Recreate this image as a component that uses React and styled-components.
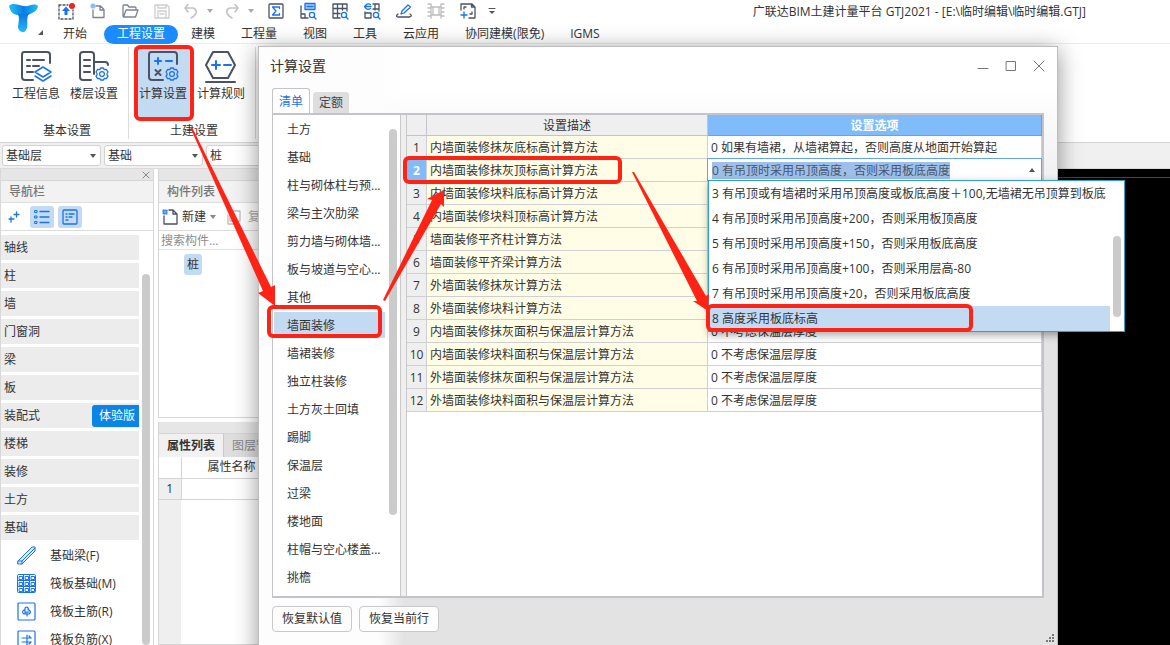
import React from 'react';
import styled, { createGlobalStyle, css } from 'styled-components';

const blue = '#1a73e8';
const slate = '#4a5266';
const red = '#ff2316';

const GlobalStyle = createGlobalStyle`
  * { box-sizing: border-box; }
  body {
    margin: 0;
    overflow: hidden;
    background: #fff;
  }
  body, button, input, select {
    color: #333;
    font: 12px/16px "Open Sans", "Noto Sans CJK SC", sans-serif;
  }
  button {
    margin: 0;
    padding: 0;
    border: 0;
    background: none;
    white-space: nowrap;
  }
  ul {
    margin: 0;
    padding: 0;
    list-style: none;
  }
`;

const Window = styled.div`
  position: relative;
  display: flex;
  flex-direction: column;
  height: 100vh;
  overflow: hidden;
  white-space: nowrap;
`;

const Header = styled.header`
  display: flex;
  height: 44px;
  border-bottom: 1px solid #ededed;
`;

const AppMenu = styled.button`
  display: flex;
  width: 50px;
`;

const HeaderMain = styled.div`
  flex: 1;
`;

const QuickBar = styled.div`
  display: flex;
  align-items: center;
  height: 21px;
`;

const QuickButton = styled.button`
  display: flex;
  flex: none;
  align-items: center;
  justify-content: center;
  gap: 8px;
  width: ${props => props.$width || 32}px;
  height: 20px;
`;

const WindowTitle = styled.h1`
  margin: 2px 84px 0 auto;
  font-size: 12px;
  font-weight: 400;
`;

const MenuTabs = styled.nav`
  display: flex;
  align-items: center;
  height: 23px;
  padding-top: 3px;
`;

const MenuTab = styled.button`
  height: 19px;
  padding: 0 13px;
  ${props => props.$active && css`
    margin: 0 0 0 4px;
    border-radius: 10px;
    background: #1a8cff;
    color: #fff;
  `}
`;

const Ribbon = styled.section`
  display: flex;
  height: 99px;
  padding-left: 2px;
  border-bottom: 1px solid #d4d4d4;
`;

const RibbonGroup = styled.div`
  display: flex;
  flex-direction: column;
  justify-content: space-between;
  margin: 3px 0;
  padding: 0 5px;
  border-right: 1px solid #dcdcdc;
  text-align: center;
`;

const RibbonButtons = styled.div`
  display: flex;
`;

const RibbonButton = styled.button`
  display: flex;
  flex-direction: column;
  align-items: center;
  gap: 3px;
  width: 58px;
  height: 70px;
  padding-top: 2px;
  background: ${props => (props.$active ? '#c3daf3' : 'none')};
`;

const GroupLabel = styled.div`
  padding-left: 4px;
`;

const SelectorBar = styled.div`
  display: flex;
  align-items: center;
  gap: 3px;
  height: 26px;
  padding-left: 2px;
  border-bottom: 1px solid #dadada;
  background: #f0f0f0;
`;

const SelectWrap = styled.label`
  position: relative;
  width: 99px;

  svg {
    position: absolute;
    top: 9px;
    right: 5px;
    pointer-events: none;
  }
`;

const Select = styled.select`
  appearance: none;
  width: 100%;
  height: 21px;
  padding: 0 3px;
  border: 1px solid #d2d2d2;
  border-radius: 3px;
  background: #fff;
`;

const Workspace = styled.main`
  display: flex;
  flex: 1;
  gap: 4px;
  min-height: 0;
`;

const NavPanel = styled.aside`
  display: flex;
  flex-direction: column;
  width: 154px;
  border: solid #d8d8d8;
  border-width: 0 1px;
`;

const PanelStrip = styled.div`
  display: flex;
  flex: none;
  align-items: center;
  justify-content: flex-end;
  height: 12px;
  padding-right: 3px;
  border-bottom: 1px solid #d6d6d6;
  background: #e6e6e6;

  button {
    display: flex;
  }
`;

const PanelTitle = styled.h2`
  flex: none;
  height: 22px;
  margin: 0;
  padding: 0 8px;
  border-bottom: 1px solid #dedede;
  background: #f2f2f2;
  color: #777;
  font-size: 12px;
  font-weight: 500;
  line-height: 22px;
`;

const Toolbar = styled.div`
  display: flex;
  flex: none;
  align-items: center;
  gap: 4px;
  height: 28px;
  padding: 0 ${props => props.$pad}px;
  border-bottom: 1px solid #dcdcdc;
`;

const ToolButton = styled.button`
  display: flex;
  align-items: center;
  justify-content: center;
  gap: 4px;
  min-width: ${props => (props.$label ? 0 : 24)}px;
  height: 22px;
  border-radius: 3px;
  background: ${props => (props.$active ? '#c3daf3' : 'none')};
  color: ${props => (props.disabled ? '#aaa' : '#333')};
`;

const NavBody = styled.div`
  display: flex;
  flex: 1;
  gap: 3px;
  min-height: 0;
  padding: 4px 3px 0 0;
`;

const NavList = styled.ul`
  flex: 1;
`;

const NavItem = styled.li`
  button {
    display: flex;
    align-items: center;
    justify-content: space-between;
    width: 100%;
    height: 25px;
    margin-bottom: 3px;
    padding-left: 3px;
    background: #ececec;
  }
`;

const TrialBadge = styled.span`
  height: 22px;
  padding: 0 4px 0 7px;
  border-radius: 3px 0 0 3px;
  background: #0b84e8;
  color: #fff;
  line-height: 21px;
`;

const NavChild = styled.li`
  button {
    display: flex;
    align-items: center;
    gap: 13px;
    height: 28px;
    padding: 0 0 2px 16px;
  }
`;

const Scrollbar = styled.div`
  width: 8px;
  height: ${props => (props.$length ? `${props.$length}px` : 'auto')};
  margin-top: ${props => props.$top}px;
  border-radius: 4px;
  background: #cbcbcb;
`;

const SideColumn = styled.div`
  display: flex;
  flex-direction: column;
  gap: 4px;
  width: 240px;
`;

const SidePanel = styled.section`
  display: flex;
  flex: ${props => (props.$height ? 'none' : 1)};
  flex-direction: column;
  height: ${props => (props.$height ? `${props.$height}px` : 'auto')};
  border: 1px solid #d6d6d6;
  border-top: 0;
`;

const SearchInput = styled.input`
  height: 19px;
  padding: 0 2px;
  border: 0;
  border-bottom: 1px solid #e2e2e2;

  &::placeholder { color: #8c8c8c; }
`;

const ComponentChip = styled.button`
  align-self: flex-start;
  height: 21px;
  margin: 4px 0 0 25px;
  padding: 0 3px;
  border-radius: 3px;
  background: #c3daf3;
`;

const PropertyTabs = styled.div`
  display: flex;
  height: 23px;
  background: #dedede;

  button {
    padding: 0 8px;
    border-right: 1px solid #c9c9d2;
    color: #888;
  }

  button[aria-selected='true'] {
    background: #f1f1f1;
    color: #333;
    font-weight: 700;
  }
`;

const PropertyTable = styled.table`
  border-collapse: collapse;
  table-layout: fixed;
  width: 100%;

  th, td {
    height: 21px;
    padding: 0;
    border: 1px solid #d4d4d4;
    border-width: 0 1px 1px 0;
    font-weight: 400;
    text-align: center;
  }

  th:first-child { width: 22px; }
  thead th:nth-child(2) { width: 101px; }
  tbody th { background: #efefef; }
`;

const PropertyRest = styled.div`
  flex: 1;
  width: 22px;
  background: #efefef;
`;

const Canvas = styled.div`
  flex: 1;
  padding-top: 8px;
  background: #000;
`;

const AxisLine = styled.div`
  height: 1px;
  background: #f00000;
`;

const Dialog = styled.section`
  position: absolute;
  top: 46px;
  right: 112px;
  bottom: -20px;
  left: 258px;
  display: flex;
  flex-direction: column;
  padding: 0 13px 0 13px;
  border: 1px solid #bdbdbd;
  background:
    linear-gradient(to right, #fdfdfd 120px, rgba(253, 253, 253, 0) 145px),
    linear-gradient(to bottom, #fff 40px, #fafafa 75px, #f1f1f1 125px, #e3e3e3 180px);
  box-shadow: 0 4px 22px rgba(0, 0, 0, 0.42);
`;

const DialogHeader = styled.header`
  display: flex;
  align-items: center;
  justify-content: space-between;
  height: 41px;
  padding-bottom: 4px;

  h2 {
    margin: 0;
    font-size: 14px;
    font-weight: 400;
    margin-left: -2px;
  }
`;

const WindowControls = styled.div`
  display: flex;
  gap: 16px;
  margin-right: -1px;

  button { display: flex; }
`;

const DialogTabs = styled.div`
  display: flex;
  align-items: flex-end;
  gap: 3px;
  height: 25px;
`;

const DialogTab = styled.button`
  width: 36px;
  height: 21px;
  border-radius: 3px 3px 0 0;
  background: #dedede;
  color: #444;

  &[aria-selected='true'] {
    width: 38px;
    height: 25px;
    padding-top: 2px;
    border: 1px solid #c3c3c9;
    border-bottom: 0;
    background: #fff;
    color: ${blue};
  }
`;

const DialogBody = styled.div`
  display: flex;
  flex: none;
  height: calc(100vh - 160px);
  min-height: 300px;
  border: 2px solid #c3c3c9;
  border-left-width: 1px;
  background: #fff;
`;

const CategoryPane = styled.div`
  display: flex;
  justify-content: space-between;
  flex: none;
  width: 127px;
  padding: 1px 3px 0 1px;
`;

const CategoryList = styled.ul`
  width: 111px;
`;

const CategoryItem = styled.li`
  button {
    width: 100%;
    height: 26px;
    margin-bottom: 2px;
    padding: 2px 4px 0 13px;
    overflow: visible;
    background: ${props => (props.$active ? '#c3daf3' : 'none')};
    text-align: left;
  }
`;

const Splitter = styled.div`
  flex: none;
  width: 7px;
  border: solid #c9c9c9;
  border-width: 0 1px;
  background: #efefef;
`;

const TablePane = styled.div`
  flex: 1;
  min-width: 0;
`;

const SettingsTable = styled.table`
  border-collapse: separate;
  border-spacing: 0;
  table-layout: fixed;
  width: 100%;

  th, td {
    height: 23px;
    padding: 2px 3px 0;
    border: solid #d0d0d4;
    border-width: 0 1px 1px 0;
    font-weight: 400;
  }

  thead th {
    height: 21px;
    border-color: #c3c3c9;
    background: #efefef;
  }

  thead th:first-child { width: 20px; }
  thead th:nth-child(2) { width: 281px; }

  thead th:last-child {
    border-color: #62a4e4;
    background: #80bbfb;
    color: #fff;
    font-weight: 700;
  }
`;

const RowNumber = styled.th`
  && {
    padding: 2px 0 0;
    background: ${props => (props.$active ? '#80bbfb' : '#efefef')};
    color: ${props => (props.$active ? '#fff' : '#333')};
    font-weight: ${props => (props.$active ? 700 : 400)};
  }
`;

const DescriptionCell = styled.td`
  background: #fffde5;
`;

const OptionCell = styled.td`
  && {
    ${props => props.$editing && css`
      padding: 0;
      border: 0;
      vertical-align: top;
    `}
  }
`;

const Combo = styled.div`
  position: relative;
  display: flex;
  align-items: center;
  justify-content: space-between;
  height: 23px;
  margin: -1px 0 0 -1px;
  padding: 1px 6px 0 4px;
  border: 1px solid #62a4e4;
  border-bottom-color: #1f9bcf;
`;

const ComboInput = styled.input`
  field-sizing: content;
  height: 17px;
  padding: 0;
  border: 0;
  background: #9dbfe9;
  color: #4a5568;
`;

const ComboToggle = styled.button`
  display: flex;
`;

const Popup = styled.div`
  position: absolute;
  z-index: 2;
  top: 21px;
  left: 0;
  display: flex;
  gap: 3px;
  width: 417px;
  padding-right: 3px;
  border: 1px solid #2fa0d0;
  background: #fff;
  box-shadow: 1px 3px 8px rgba(0, 0, 0, 0.35);
`;

const Options = styled.ul`
  flex: 1;
`;

const Option = styled.li`
  height: 25px;
  padding: 0 3px;
  background: ${props => (props.$active ? '#c3daf3' : '#fff')};
  line-height: 25px;
`;

const DialogFooter = styled.footer`
  display: flex;
  gap: 7px;
  padding-top: 8px;
`;

const FooterButton = styled.button`
  width: 80px;
  height: 26px;
  border: 1px solid #c8c8c8;
  border-radius: 4px;
  background: #fdfdfd;
`;

const ResizeGrip = styled.svg`
  position: absolute;
  right: 3px;
  bottom: 22px;
`;

const Annotations = styled.svg`
  position: absolute;
  z-index: 3;
  top: 0;
  left: 0;
  pointer-events: none;
`;

const Icon = ({ size = 18, color = slate, width = 1.3, children, ...rest }) => (
  <svg
    width={size}
    height={size}
    viewBox={`0 0 ${size} ${size}`}
    fill="none"
    stroke={color}
    strokeWidth={width}
    strokeLinecap="round"
    strokeLinejoin="round"
    aria-hidden="true"
    {...rest}
  >
    {children}
  </svg>
);

const Caret = ({ color = '#555', up }) => (
  <svg width="6" height="4" viewBox="0 0 6 4" aria-hidden="true">
    <path d={up ? 'M0 4L3 0L6 4Z' : 'M0 0H6L3 4Z'} fill={color} />
  </svg>
);

const Logo = () => (
  <svg width="49" height="43" viewBox="0 0 49 43" aria-hidden="true">
    <defs>
      <linearGradient id="logoTop" x1="0" x2="1">
        <stop offset="0" stopColor="#22c4f5" />
        <stop offset="0.5" stopColor="#0a7ee4" />
        <stop offset="1" stopColor="#1cc0f6" />
      </linearGradient>
      <linearGradient id="logoStem" x1="0" x2="0" y1="0" y2="1">
        <stop offset="0" stopColor="#0b74dc" />
        <stop offset="1" stopColor="#25b9fa" />
      </linearGradient>
    </defs>
    <path d="M9 6C12 2 18 5 24 6C29 7 34 2 38 6C37 12 32 13 28 15C25 18 20 18 18 15C13 15 10 11 9 6Z" fill="url(#logoTop)" />
    <path d="M18 13C21 15 25 14 29 13C26 18 28 24 27 28C25 34 20 33 18 28C18 24 20 19 18 13Z" fill="url(#logoStem)" />
    <path d="M43 30V35H38Z" fill="#555" />
  </svg>
);

const Gear = ({ x, y }) => (
  <g transform={`translate(${x} ${y})`} stroke={blue} strokeWidth="1.3">
    <path d="M-1.5-6H1.5L2.2-4.3L4.3-4.6L6-2L5-.5V.8L6 2.2L4.4 4.6L2.4 4.4L1.5 6H-1.5L-2.4 4.4L-4.4 4.6L-6 2.2L-5 .8V-.5L-6-2L-4.3-4.6L-2.2-4.3Z" />
    <circle r="2.4" />
  </g>
);

const Lens = () => (
  <g stroke={blue}>
    <circle cx="13" cy="13" r="2.6" />
    <path d="M15 15L17 17" />
  </g>
);

const quickActions = [
  {
    label: '上传',
    icon: (
      <Icon>
        <path d="M2 3H11M2 3V17H16V8" strokeDasharray="2 2" />
        <path d="M9 4.500L13 9H10.500V13H7.500V9H5Z" fill={blue} stroke="none" />
        <circle cx="15" cy="4" r="3" fill="#e8232a" stroke="none" />
      </Icon>
    )
  },
  {
    label: '新建',
    icon: (
      <Icon color="#7c8290">
        <path d="M4 8V15.500H15V7.500L11.500 4H7M11 4V8H15" />
        <circle cx="4" cy="4" r="2.600" fill="#8ebdf5" stroke="none" />
      </Icon>
    )
  },
  {
    label: '打开',
    icon: <Icon color="#7c8290"><path d="M2 14V4Q2 3 3 3H6.500L8 5H14Q15 5 15 6V7M2.500 15L5 8H17L14.500 15Z" /></Icon>
  },
  {
    label: '保存',
    icon: <Icon color="#cdcdcd"><path d="M2 3H14L16 5V16H2ZM5 3V6H13V3M5 16V9H13V16M7 12H11" /></Icon>
  },
  {
    label: '撤销',
    width: 40,
    icon: <Icon color="#c3c3c3" size={16} width={1.6}><path d="M2 5H10Q14 6 13 10Q12 13 8 15M5 1.500L2 5L5 9" /></Icon>,
    caret: true
  },
  {
    label: '恢复',
    width: 42,
    icon: <Icon color="#c3c3c3" size={16} width={1.6}><path d="M14 5H6Q2 6 3 10Q4 13 8 15M11 1.500L14 5L11 9" /></Icon>,
    caret: true
  },
  {
    label: '汇总计算',
    icon: (
      <Icon>
        <rect x="2" y="2" width="14" height="14" rx="1" />
        <path d="M12.500 6.500V5H5.500L9 9L5.500 13H12.500V11.500" stroke={blue} />
      </Icon>
    )
  },
  {
    label: '查看计算式',
    icon: (
      <Icon>
        <path d="M2 4V16H9M2 12H6V16" />
        <rect x="6" y="1.500" width="10" height="6" fill="#a9cdf8" stroke={blue} />
        <path d="M8 4.500H14" stroke={blue} />
        <Lens />
      </Icon>
    )
  },
  {
    label: '查看工程量',
    icon: <Icon><path d="M9 16H2V2H16V9M2 6.500H16M2 11.500H9M6.500 2V16M11.500 2V8" /><Lens /></Icon>
  },
  {
    label: '查看报表',
    icon: (
      <Icon>
        <path d="M10 2H16V9M2 10V16H8M2 11H8V16M12 2V8M10 7H16" />
        <path d="M7.500 2.500Q5 1 3 3L1.500 4.500L3 6.500Q5 8 7.500 6.500M1.500 4.500H8" stroke={blue} />
        <Lens />
      </Icon>
    )
  },
  {
    label: '编辑',
    icon: (
      <Icon>
        <path d="M3 12Q0 14.500 3 15H14Q18 14 15 12" />
        <path d="M6 12L7 9L13 3L15.500 5L9 11Z" stroke={blue} />
      </Icon>
    )
  },
  {
    label: '显示',
    icon: <Icon color="#bdbdbd"><path d="M4 2V16M14 2V16M4 5H14M4 13H14M6 5V13M12 5V13M1 2H4M1 6H4M1 10H4M1 14H4M14 2H17M14 6H17M14 10H17M14 14H17" /></Icon>
  },
  {
    label: '扩展',
    icon: (
      <Icon>
        <path d="M2 8V2H13L16 5V16H10M12.500 2V5H16M5 7V5H7M11 12H13V10" />
        <path d="M2 13H8M5 10V16" stroke={blue} />
      </Icon>
    )
  },
  {
    label: '自定义',
    width: 16,
    icon: <Icon size={8} color="#555" width={1}><path d="M1 1.500H7" /><path d="M1 4H7L4 7Z" fill="#555" stroke="none" /></Icon>
  }
];

const menuTabs = ['开始', '工程设置', '建模', '工程量', '视图', '工具', '云应用', '协同建模(限免)', 'IGMS'];

const ribbonGroups = [
  {
    label: '基本设置',
    buttons: [
      {
        text: '工程信息',
        icon: (
          <Icon size={34} width={2}>
            <path d="M31 14V6Q31 3 28 3H5Q3 3 3 6V28Q3 31 6 31H14" />
            <path d="M8 11H11M14 11H25M8 17H11M14 17H20M8 23H14" />
            <path d="M16 23L24 18L32 23L24 28ZM16 27L24 32L32 27" stroke={blue} strokeWidth="1.5" />
          </Icon>
        )
      },
      {
        text: '楼层设置',
        icon: (
          <Icon size={34} width={2}>
            <path d="M14 31H6Q3 31 3 28V6Q3 3 6 3H14Q17 3 17 6V25M17 13H28Q31 13 31 16" />
            <path d="M7 11H13M7 17H13M7 23H13" />
            <Gear x={25} y={25} />
          </Icon>
        )
      }
    ]
  },
  {
    label: '土建设置',
    buttons: [
      {
        text: '计算设置',
        active: true,
        icon: (
          <Icon size={34} width={2}>
            <path d="M31 15V6Q31 3 28 3H5Q3 3 3 6V28Q3 31 6 31H17" />
            <path d="M9 12H15M12 9V15M20 12H26" stroke={blue} />
            <path d="M9.500 21L14.500 26M14.500 21L9.500 26" />
            <Gear x={26} y={25} />
          </Icon>
        )
      },
      {
        text: '计算规则',
        icon: (
          <Icon size={34} width={2}>
            <path d="M9 3H24L31 16L24 29H9L2 16ZM2 33H31" />
            <path d="M8 16H16M12 12V20M20 16H27" stroke={blue} />
          </Icon>
        )
      }
    ]
  }
];

const navItems = ['轴线', '柱', '墙', '门窗洞', '梁', '板', '装配式', '楼梯', '装修', '土方', '基础'];

const gridCells = [1, 7, 13];

const foundationItems = [
  {
    text: '基础梁(F)',
    icon: <Icon size={20} color={blue} width={1}><path d="M1 15L15 1H18V5L5 18H1ZM1 15H5V18M5 15L18 2" fill="#dbe9fb" /></Icon>
  },
  {
    text: '筏板基础(M)',
    icon: (
      <Icon size={20} color={blue} width={1}>
        <rect x="0.500" y="0.500" width="18" height="18" rx="1" />
        {gridCells.map((y) => gridCells.map((x) => (
          <rect key={`${x}-${y}`} x={x + 1.5} y={y + 1.5} width="3" height="3" />
        )))}
        <path d="M.5 6.500H18.500M.5 12.500H18.500M6.500 .5V18.500M12.500 .5V18.500" />
      </Icon>
    )
  },
  {
    text: '筏板主筋(R)',
    icon: (
      <Icon size={20} color={blue} width={1.2}>
        <rect x="1" y="1" width="17" height="17" rx="1" />
        <path d="M8 12V7Q8 5 10 5Q12 6 11 8M7 8Q4 10 7 12H12Q15 10 12 8M9 10H12M10 10V14" />
      </Icon>
    )
  },
  {
    text: '筏板负筋(X)',
    icon: (
      <Icon size={20} color={blue} width={1.2}>
        <rect x="1" y="1" width="17" height="17" rx="1" />
        <path d="M5 8H14M5 12H14M10 5V15M12 6L14 8M12 14L14 12" />
      </Icon>
    )
  }
];

const categories = [
  '土方', '基础', '柱与砌体柱与预...', '梁与主次肋梁', '剪力墙与砌体墙...', '板与坡道与空心...', '其他', '墙面装修',
  '墙裙装修', '独立柱装修', '土方灰土回填', '踢脚', '保温层', '过梁', '楼地面', '柱帽与空心楼盖...', '挑檐'
];

const settings = [
  { text: '内墙面装修抹灰底标高计算方法', option: '0 如果有墙裙，从墙裙算起，否则高度从地面开始算起' },
  { text: '内墙面装修抹灰顶标高计算方法', option: '0 有吊顶时采用吊顶高度，否则采用板底高度', editing: true },
  { text: '内墙面装修块料底标高计算方法', option: '' },
  { text: '内墙面装修块料顶标高计算方法', option: '' },
  { text: '墙面装修平齐柱计算方法', option: '' },
  { text: '墙面装修平齐梁计算方法', option: '' },
  { text: '外墙面装修抹灰计算方法', option: '' },
  { text: '外墙面装修块料计算方法', option: '' },
  { text: '内墙面装修抹灰面积与保温层计算方法', option: '0 不考虑保温层厚度' },
  { text: '内墙面装修块料面积与保温层计算方法', option: '0 不考虑保温层厚度' },
  { text: '外墙面装修抹灰面积与保温层计算方法', option: '0 不考虑保温层厚度' },
  { text: '外墙面装修块料面积与保温层计算方法', option: '0 不考虑保温层厚度' }
];

const heightOptions = [
  '3 有吊顶或有墙裙时采用吊顶高度或板底高度＋100,无墙裙无吊顶算到板底',
  '4 有吊顶时采用吊顶高度+200，否则采用板顶高度',
  '5 有吊顶时采用吊顶高度+150，否则采用板底高度',
  '6 有吊顶时采用吊顶高度+100，否则采用层高-80',
  '7 有吊顶时采用吊顶高度+20，否则采用板底高度',
  '8 高度采用板底标高'
];

const FilterSelect = ({ label, value }) => (
  <SelectWrap>
    <Select aria-label={label} defaultValue={value}>
      <option>{value}</option>
    </Select>
    <Caret />
  </SelectWrap>
);

const AppHeader = () => (
  <Header>
    <AppMenu aria-label="应用菜单"><Logo /></AppMenu>
    <HeaderMain>
      <QuickBar>
        {quickActions.map((action) => (
          <QuickButton key={action.label} aria-label={action.label} $width={action.width}>
            {action.icon}
            {action.caret && <Caret color="#aaa" />}
          </QuickButton>
        ))}
        <WindowTitle>广联达BIM土建计量平台 GTJ2021 - [E:\临时编辑\临时编辑.GTJ]</WindowTitle>
      </QuickBar>
      <MenuTabs>
        {menuTabs.map((tab) => (
          <MenuTab key={tab} $active={tab === '工程设置'}>{tab}</MenuTab>
        ))}
      </MenuTabs>
    </HeaderMain>
  </Header>
);

const Navigator = () => (
  <NavPanel>
    <PanelStrip>
      <button aria-label="关闭导航栏">
        <Icon size={8} color="#888" width={1}><path d="M1 1L7 7M7 1L1 7" /></Icon>
      </button>
    </PanelStrip>
    <PanelTitle>导航栏</PanelTitle>
    <Toolbar $pad={1}>
      <ToolButton aria-label="添加">
        <Icon size={14} color={blue}><path d="M2 9H7M4 7V12M7 4.500H12M9.500 2V7" /></Icon>
      </ToolButton>
      <ToolButton aria-label="列表" $active>
        <Icon size={16} color={blue}>
          <path d="M6 2.500H15M6 8H15M6 13.500H15" />
          <path d="M1 1.500H3V3.500H1ZM1 7H3V9H1ZM1 12.500H3V14.500H1Z" strokeWidth="1" />
        </Icon>
      </ToolButton>
      <ToolButton aria-label="详情" $active>
        <Icon size={16} color={blue}>
          <rect x="1" y="1" width="14" height="14" rx="1" />
          <path d="M4 5H5M7 5H12M4 8H5M7 8H10M4 11H6" />
        </Icon>
      </ToolButton>
    </Toolbar>
    <NavBody>
      <NavList>
        {navItems.map((item) => (
          <NavItem key={item}>
            <button>
              {item}
              {item === '装配式' && <TrialBadge>体验版</TrialBadge>}
            </button>
          </NavItem>
        ))}
        {foundationItems.map((item) => (
          <NavChild key={item.text}>
            <button>
              {item.icon}
              {item.text}
            </button>
          </NavChild>
        ))}
      </NavList>
      <Scrollbar $top={39} />
    </NavBody>
  </NavPanel>
);

const ComponentPanels = () => (
  <SideColumn>
    <SidePanel $height={249}>
      <PanelStrip />
      <PanelTitle>构件列表</PanelTitle>
      <Toolbar $pad={3}>
        <ToolButton $label>
          <Icon size={16}>
            <path d="M2 7V15H15V5L11 1H7M11 1V5H15" />
            <path d="M1 1H5V5H1Z" fill="#6aa9f2" stroke={blue} strokeWidth="1" strokeDasharray="1 1" />
          </Icon>
          新建
        </ToolButton>
        <ToolButton $label aria-label="新建选项"><Caret color="#888" /></ToolButton>
        <ToolButton $label disabled>
          <Icon size={24} color="#bbb"><path d="M10 6H20V16H10ZM14 16V19H8V10" /></Icon>
          复制
        </ToolButton>
      </Toolbar>
      <SearchInput aria-label="搜索构件" placeholder="搜索构件..." />
      <ComponentChip>桩</ComponentChip>
    </SidePanel>
    <SidePanel>
      <PanelStrip />
      <PropertyTabs role="tablist">
        <button role="tab" aria-selected="true">属性列表</button>
        <button role="tab" aria-selected="false">图层管理</button>
      </PropertyTabs>
      <PropertyTable>
        <thead>
          <tr>
            <th />
            <th>属性名称</th>
            <th />
          </tr>
        </thead>
        <tbody>
          <tr>
            <th>1</th>
            <td />
            <td />
          </tr>
        </tbody>
      </PropertyTable>
      <PropertyRest />
    </SidePanel>
  </SideColumn>
);

const HeightCombo = ({ value }) => (
  <Combo>
    <ComboInput
      role="combobox"
      aria-label="设置选项"
      aria-expanded="true"
      aria-controls="height-options"
      defaultValue={value}
    />
    <ComboToggle aria-label="收起选项"><Caret up /></ComboToggle>
    <Popup>
      <Options id="height-options" role="listbox">
        {heightOptions.map((option) => (
          <Option
            key={option}
            role="option"
            aria-selected={option.startsWith('8')}
            $active={option.startsWith('8')}
          >
            {option}
          </Option>
        ))}
      </Options>
      <Scrollbar $top={55} $length={81} />
    </Popup>
  </Combo>
);

const SettingsDialog = () => (
  <Dialog role="dialog" aria-labelledby="dialog-title">
    <DialogHeader>
      <h2 id="dialog-title">计算设置</h2>
      <WindowControls>
        <button aria-label="最小化"><Icon size={12} color="#777" width={1}><path d="M1 8.500H11" /></Icon></button>
        <button aria-label="最大化"><Icon size={12} color="#777" width={1}><path d="M1.500 1.500H10.500V10.500H1.500Z" /></Icon></button>
        <button aria-label="关闭"><Icon size={12} color="#777" width={1}><path d="M1 1L11 11M11 1L1 11" /></Icon></button>
      </WindowControls>
    </DialogHeader>
    <DialogTabs role="tablist">
      <DialogTab role="tab" aria-selected="true">清单</DialogTab>
      <DialogTab role="tab" aria-selected="false">定额</DialogTab>
    </DialogTabs>
    <DialogBody>
      <CategoryPane>
        <CategoryList>
          {categories.map((category) => (
            <CategoryItem key={category} $active={category === '墙面装修'}>
              <button>{category}</button>
            </CategoryItem>
          ))}
        </CategoryList>
        <Scrollbar $top={13} $length={386} />
      </CategoryPane>
      <Splitter />
      <TablePane>
        <SettingsTable>
          <thead>
            <tr>
              <th />
              <th>设置描述</th>
              <th>设置选项</th>
            </tr>
          </thead>
          <tbody>
            {settings.map((row, index) => (
              <tr key={row.text}>
                <RowNumber $active={row.editing}>{index + 1}</RowNumber>
                <DescriptionCell>{row.text}</DescriptionCell>
                <OptionCell $editing={row.editing}>
                  {row.editing ? <HeightCombo value={row.option} /> : row.option}
                </OptionCell>
              </tr>
            ))}
          </tbody>
        </SettingsTable>
      </TablePane>
    </DialogBody>
    <DialogFooter>
      <FooterButton>恢复默认值</FooterButton>
      <FooterButton>恢复当前行</FooterButton>
    </DialogFooter>
    <ResizeGrip width="8" height="8" viewBox="0 0 8 8" aria-hidden="true">
      <path d="M6 0H8V2H6ZM3 3H5V5H3ZM6 3H8V5H6ZM0 6H2V8H0ZM3 6H5V8H3ZM6 6H8V8H6Z" fill="#777" />
    </ResizeGrip>
  </Dialog>
);

// Red boxes and arrows that walk through the steps in order
const Walkthrough = () => (
  <Annotations width="1170" height="645" viewBox="0 0 1170 645" aria-hidden="true">
    <g fill="none" stroke={red} strokeWidth="4">
      <rect x="136" y="47" width="56" height="72" rx="4" />
      <rect x="269" y="307" width="111" height="29" rx="4" />
      <rect x="405" y="158" width="215" height="24" rx="4" />
      <rect x="708" y="306" width="263" height="24" rx="4" />
    </g>
    <g fill={red}>
      <path d="M190 127L192 127L271 287L275 285V306L258 293L263 291Z" />
      <path d="M383 300L385 301L441 204L444 207V190L427 199L432 200Z" />
      <path d="M632 172L634 172L706 296L709 294L708 311L693 301L697 301Z" />
    </g>
  </Annotations>
);

const App = () => (
  <>
    <GlobalStyle />
    <Window>
      <AppHeader />
      <Ribbon>
        {ribbonGroups.map((group) => (
          <RibbonGroup key={group.label}>
            <RibbonButtons>
              {group.buttons.map((button) => (
                <RibbonButton key={button.text} $active={button.active}>
                  {button.icon}
                  {button.text}
                </RibbonButton>
              ))}
            </RibbonButtons>
            <GroupLabel>{group.label}</GroupLabel>
          </RibbonGroup>
        ))}
      </Ribbon>
      <SelectorBar>
        <FilterSelect label="楼层" value="基础层" />
        <FilterSelect label="分类" value="基础" />
        <FilterSelect label="构件类型" value="桩" />
      </SelectorBar>
      <Workspace>
        <Navigator />
        <ComponentPanels />
        <Canvas><AxisLine /></Canvas>
      </Workspace>
      <SettingsDialog />
      <Walkthrough />
    </Window>
  </>
);

export default App;
